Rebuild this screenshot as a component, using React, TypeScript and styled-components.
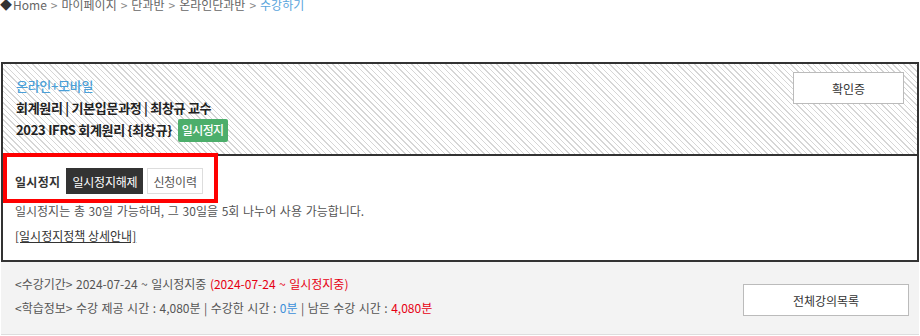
import React from 'react'
import styled, { createGlobalStyle } from 'styled-components'

const GlobalStyle = createGlobalStyle`
  html, body {
    margin: 0;
    padding: 0;
    background: #fff;
  }
  body {
    font-family: "Noto Sans CJK KR", "Noto Sans", sans-serif;
    font-size: 12px;
    color: #333;
    overflow: hidden;
  }
`

const Page = styled.div`
  width: 918px;
  margin-left: 1px;
`

const Breadcrumb = styled.div`
  display: flex;
  align-items: center;
  height: 16px;
  margin: -3px 0 49px -1px;
  line-height: 16px;
  font-size: 12px;
  color: #666;
`

const Crumb = styled.span<{ $current?: boolean }>`
  color: ${p => (p.$current ? '#5aa5dc' : '#666')};
`

const Sep = styled.span`
  color: #888;
  margin: 0 4px;
`

const Diamond = styled.span`
  color: #333;
  font-size: 12px;
  margin-right: 1px;
`

const Box = styled.div`
  border: 2px solid #333;
  box-sizing: border-box;
`

const CourseHead = styled.div`
  display: flex;
  justify-content: space-between;
  align-items: flex-start;
  height: 92px;
  padding: 8px 13px 0 13px;
  box-sizing: border-box;
  border-bottom: 2px solid #333;
  background: repeating-linear-gradient(
    45deg,
    #d6d6d6 0px,
    #d6d6d6 1px,
    #fff 1px,
    #fff 4px
  );
`

const CourseInfo = styled.div`
  display: flex;
  flex-direction: column;
  padding-top: 3px;
`

const InfoLine = styled.div<{ $tone?: 'blue' | 'strong' }>`
  display: flex;
  align-items: center;
  height: 22px;
  line-height: 22px;
  font-size: 13px;
  letter-spacing: -0.3px;
  font-weight: ${p => (p.$tone === 'strong' ? 700 : 500)};
  color: ${p => (p.$tone === 'blue' ? '#4a9fd8' : '#222')};
`

const Badge = styled.span`
  display: inline-flex;
  align-items: center;
  height: 23px;
  margin-left: 6px;
  padding: 0 4px;
  border-radius: 2px;
  background: #4cae6b;
  color: #fff;
  font-size: 12px;
  font-weight: 500;
  letter-spacing: -0.6px;
`

const OutlineButton = styled.button<{ $w: number }>`
  width: ${p => p.$w}px;
  height: 32px;
  background: #fff;
  border: 1px solid #bbb;
  font-family: inherit;
  font-size: 12px;
  color: #333;
  cursor: pointer;
`

const PauseArea = styled.div`
  position: relative;
  padding: 12px 12px 13px 12px;
`

const Highlight = styled.div`
  position: absolute;
  left: 0;
  top: -3px;
  width: 215px;
  height: 50px;
  border: 4px solid #ff0000;
  box-sizing: border-box;
  pointer-events: none;
`

const TabRow = styled.div`
  display: flex;
  align-items: center;
  height: 26px;
  gap: 4px;
`

const TabLabel = styled.span`
  font-weight: 700;
  font-size: 12px;
  letter-spacing: 0.3px;
  color: #333;
  margin-right: 2px;
`

const Tab = styled.button<{ $active?: boolean }>`
  height: 26px;
  padding: 0 5px;
  font-family: inherit;
  font-size: 12px;
  letter-spacing: -0.2px;
  border: 1px solid ${p => (p.$active ? '#333' : '#ddd')};
  background: ${p => (p.$active ? '#333' : '#fff')};
  color: ${p => (p.$active ? '#fff' : '#555')};
  cursor: pointer;
`

const Notice = styled.div`
  margin-top: 6px;
  line-height: 22px;
  font-size: 12px;
  word-spacing: 1px;
  color: #555;
`

const PolicyLink = styled.a`
  display: inline-block;
  margin-top: 3px;
  line-height: 22px;
  font-size: 12px;
  color: #333;
  text-decoration: underline;
`

const Summary = styled.div`
  display: flex;
  justify-content: space-between;
  align-items: flex-start;
  height: 73px;
  box-sizing: border-box;
  padding: 10px 10px 0 14px;
  background: #f3f3f3;
  border-bottom: 1px solid #ddd;
`

const SummaryText = styled.div`
  display: flex;
  flex-direction: column;
`

const SummaryLine = styled.div`
  line-height: 24px;
  font-size: 12px;
  word-spacing: 0.8px;
  color: #555;
`

const Mark = styled.span<{ $tone: 'red' | 'blue' }>`
  color: ${p => (p.$tone === 'red' ? '#e60012' : '#3b8fd9')};
`

const SummaryButton = styled(OutlineButton)`
  margin-top: 12px;
`

const crumbs = ['마이페이지', '단과반', '온라인단과반']

export default function App() {
  return (
    <>
      <GlobalStyle />
      <Page>
        <Breadcrumb>
          <Diamond>◆</Diamond>
          <Crumb>Home</Crumb>
          {crumbs.map(c => (
            <React.Fragment key={c}>
              <Sep>&gt;</Sep>
              <Crumb>{c}</Crumb>
            </React.Fragment>
          ))}
          <Sep>&gt;</Sep>
          <Crumb $current>수강하기</Crumb>
        </Breadcrumb>

        <Box>
          <CourseHead>
            <CourseInfo>
              <InfoLine $tone="blue">온라인+모바일</InfoLine>
              <InfoLine $tone="strong">회계원리 | 기본입문과정 | 최창규 교수</InfoLine>
              <InfoLine $tone="strong">
                2023 IFRS 회계원리 {'{최창규}'}
                <Badge>일시정지</Badge>
              </InfoLine>
            </CourseInfo>
            <OutlineButton $w={111}>확인증</OutlineButton>
          </CourseHead>

          <PauseArea>
            <Highlight />
            <TabRow>
              <TabLabel>일시정지</TabLabel>
              <Tab $active>일시정지해제</Tab>
              <Tab>신청이력</Tab>
            </TabRow>
            <Notice>일시정지는 총 30일 가능하며, 그 30일을 5회 나누어 사용 가능합니다.</Notice>
            <PolicyLink href="#">[일시정지정책 상세안내]</PolicyLink>
          </PauseArea>
        </Box>

        <Summary>
          <SummaryText>
            <SummaryLine>
              &lt;수강기간&gt; 2024-07-24 ~ 일시정지중 <Mark $tone="red">(2024-07-24 ~ 일시정지중)</Mark>
            </SummaryLine>
            <SummaryLine>
              &lt;학습정보&gt; 수강 제공 시간 : 4,080분 | 수강한 시간 : <Mark $tone="blue">0분</Mark> | 남은 수강 시간 : <Mark $tone="red">4,080분</Mark>
            </SummaryLine>
          </SummaryText>
          <SummaryButton $w={166}>전체강의목록</SummaryButton>
        </Summary>
      </Page>
    </>
  )
}
